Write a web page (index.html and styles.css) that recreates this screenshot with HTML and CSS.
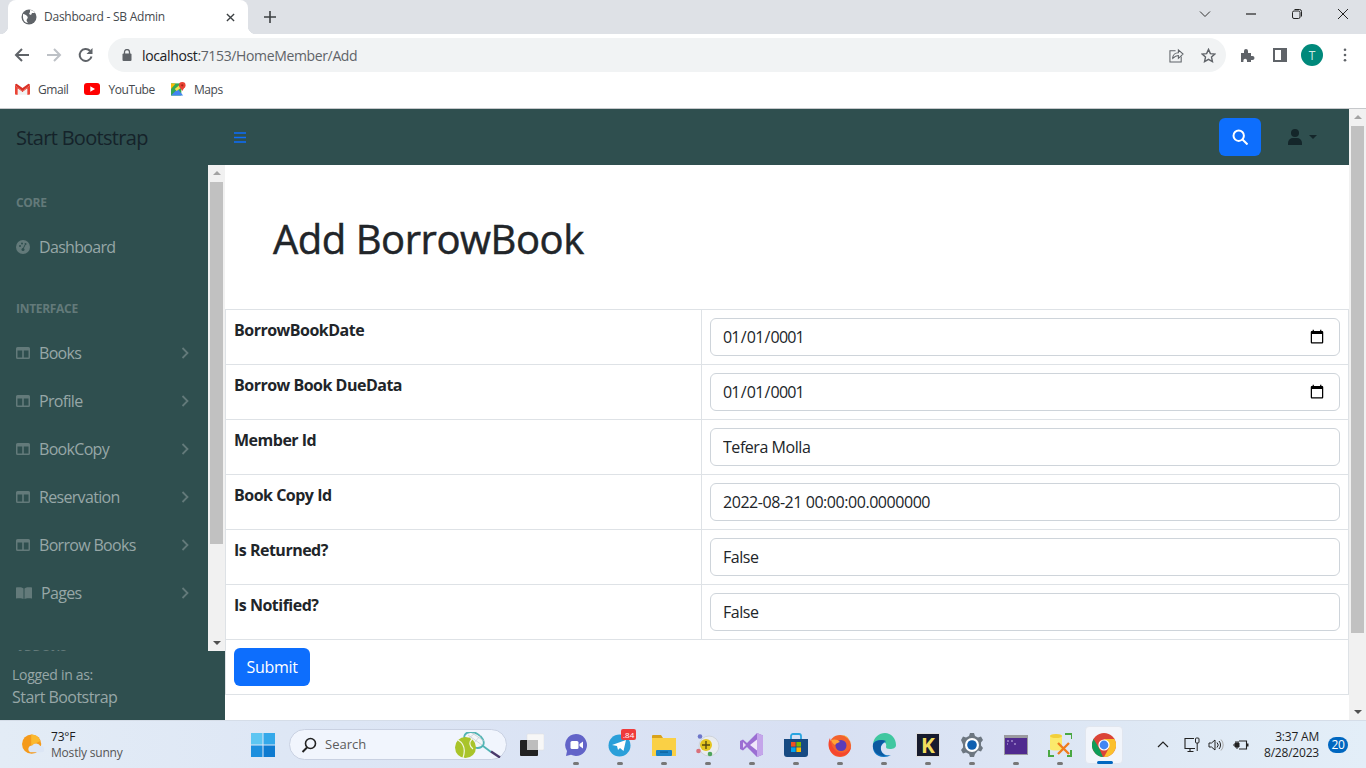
FILE: index.html
```html
<!DOCTYPE html>
<html lang="en">
<head>
<meta charset="utf-8">
<title>Dashboard - SB Admin</title>
<link rel="stylesheet" href="styles.css">
</head>
<body>
<div class="browser">
  <div class="tabstrip">
    <div class="tab">
      <svg class="favicon" viewBox="0 0 16 16"><circle cx="8" cy="8" r="7.5" fill="#5f6368"/><path d="M2 5c2 0 3 1 4 2s1 2 0 3 0 3 1 4c-3 0-5-3-5-6zM9 1c2 0 4 1 5 3h-3l-1 2-2-1 1-2z" fill="#fff"/></svg>
      <span class="tab-title">Dashboard - SB Admin</span>
      <svg class="tab-close" viewBox="0 0 10 10"><path d="M1 1l8 8M9 1l-8 8" stroke="#3c4043" stroke-width="1.5"/></svg>
    </div>
    <svg class="newtab" viewBox="0 0 12 12"><path d="M6 0v12M0 6h12" stroke="#3c4043" stroke-width="1.6"/></svg>
    <div class="spacer"></div>
    <div class="winbtn"><svg viewBox="0 0 12 12"><path d="M1 3.5l5 5 5-5" fill="none" stroke="#333" stroke-width="1"/></svg></div>
    <div class="winbtn"><svg viewBox="0 0 12 12"><path d="M1 6h10" stroke="#222" stroke-width="1.2"/></svg></div>
    <div class="winbtn"><svg viewBox="0 0 12 12"><rect x="1.5" y="3" width="7.5" height="7.5" rx="1.5" fill="none" stroke="#222"/><path d="M3.5 1.5h5a2 2 0 0 1 2 2v5" fill="none" stroke="#222"/></svg></div>
    <div class="winbtn"><svg viewBox="0 0 12 12"><path d="M1 1l10 10M11 1L1 11" stroke="#222" stroke-width="1"/></svg></div>
  </div>
  <div class="toolbar">
    <svg class="navicon" viewBox="0 0 16 16"><path d="M15 8H2M8 2L2 8l6 6" fill="none" stroke="#5f6368" stroke-width="2"/></svg>
    <svg class="navicon" viewBox="0 0 16 16"><path d="M1 8h13M8 2l6 6-6 6" fill="none" stroke="#bdc1c6" stroke-width="2"/></svg>
    <svg class="navicon" viewBox="0 0 16 16"><path d="M13.5 9.5A6 6 0 1 1 12 3.8" fill="none" stroke="#5f6368" stroke-width="2"/><path d="M14.5 1v6h-6z" fill="#5f6368"/></svg>
    <div class="omnibox">
      <svg class="lock" viewBox="0 0 10 12"><rect x="0.5" y="4.5" width="9" height="7.5" rx="1" fill="#5f6368"/><path d="M2.5 5V3a2.5 2.5 0 0 1 5 0v2" fill="none" stroke="#5f6368" stroke-width="1.3"/></svg>
      <span class="url"><span class="url-host">localhost</span>:7153/HomeMember/Add</span>
      <span class="spacer"></span>
      <svg class="omni-icon share" viewBox="0 0 16 16"><path d="M7 3H1v12h12V9" fill="none" stroke="#5f6368" stroke-width="1.1"/><path d="M4 11c0-4 3-6 6-6V2l5 4.500-5 4.500V8C8 8 6 9 4 11z" fill="none" stroke="#5f6368" stroke-width="1.1"/></svg>
      <svg class="omni-icon" viewBox="0 0 16 16"><path d="M8 1.500l2 4.500 4.800.5-3.600 3.200 1 4.800L8 12.100 3.800 14.500l1-4.800L1.200 6.500 6 6z" fill="none" stroke="#5f6368" stroke-width="1.500"/></svg>
    </div>
    <svg class="ext" viewBox="0 0 16 16"><path d="M1 6h3V4a2 2 0 0 1 4 0v2h3v3h1.500a2 2 0 0 1 0 4H11v2H7v-1.500a1.800 1.800 0 0 0-3.600 0V15H1z" fill="#5f6368"/></svg>
    <svg class="panel" viewBox="0 0 14 14"><path d="M0 0h14v14H0zM2 2v10h6V2z" fill="#5f6368" fill-rule="evenodd"/></svg>
    <span class="avatar">T</span>
    <svg class="kebab" viewBox="0 0 4 16"><circle cx="2" cy="2" r="1.500" fill="#5f6368"/><circle cx="2" cy="8" r="1.500" fill="#5f6368"/><circle cx="2" cy="14" r="1.500" fill="#5f6368"/></svg>
  </div>
  <div class="bookmarks">
    <a class="bm">
      <svg class="bm-ico" viewBox="0 0 16 12"><path d="M0 2l8 6 8-6v9a1 1 0 0 1-1 1h-2V5.500L8 9.500 3 5.500V12H1a1 1 0 0 1-1-1z" fill="#ea4335"/><path d="M3 5.500V12h10V5.500L8 9.500z" fill="#f1f1f1"/><path d="M0 2a1.500 1.500 0 0 1 2.400-1.200L8 5 13.600.8A1.500 1.500 0 0 1 16 2L8 8z" fill="#d93025"/></svg>
      <span>Gmail</span>
    </a>
    <a class="bm">
      <svg class="bm-ico yt" viewBox="0 0 16 12"><rect width="16" height="12" rx="3" fill="#f00"/><path d="M6.300 3.300v5.400L11 6z" fill="#fff"/></svg>
      <span>YouTube</span>
    </a>
    <a class="bm">
      <svg class="bm-ico maps" viewBox="0 0 16 16"><path d="M0 2h11v13H0z" fill="#34a853"/><path d="M0 15l7-7 6 7z" fill="#4285f4"/><path d="M0 2h5L0 8z" fill="#fbbc04"/><path d="M4 8l7-6 2 3-7 5z" fill="#f4e04d"/><circle cx="12" cy="4" r="3.500" fill="#ea4335"/><path d="M9.500 6l2.500 4 2.500-4z" fill="#ea4335"/><circle cx="12" cy="4" r="1.200" fill="#a52714"/></svg>
      <span>Maps</span>
    </a>
  </div>
</div>

<div class="viewport">
  <div class="page">
    <nav class="topnav">
      <a class="brand">Start Bootstrap</a>
      <svg class="burger" viewBox="0 0 12 11"><path d="M0 1h12M0 5.500h12M0 10h12" stroke="#0d6efd" stroke-width="1.600"/></svg>
      <span class="spacer"></span>
      <button class="search-btn" type="button"><svg viewBox="0 0 16 16"><circle cx="6.700" cy="6.700" r="5.200" fill="none" stroke="#fff" stroke-width="2"/><path d="M10.500 10.500l5 5" stroke="#fff" stroke-width="2"/></svg></button>
      <div class="user">
        <svg viewBox="0 0 14 16"><circle cx="7" cy="4" r="4" fill="#14262a"/><path d="M0 16v-2a5 5 0 0 1 5-5h4a5 5 0 0 1 5 5v2z" fill="#14262a"/></svg>
        <span class="caret"></span>
      </div>
    </nav>
    <div class="layout">
      <aside class="sidebar">
        <div class="side-scroll">
          <div class="menu">
            <div class="heading">CORE</div>
            <a class="item">
              <svg class="ico" viewBox="0 0 14 14"><circle cx="7" cy="7" r="7" fill="#637a7a"/><circle cx="4" cy="6" r="1" fill="#2f4f4f"/><circle cx="6" cy="3.500" r="1" fill="#2f4f4f"/><circle cx="9.500" cy="4" r="1" fill="#2f4f4f"/><circle cx="7" cy="9.500" r="1.500" fill="#2f4f4f"/><path d="M7 9l2-4" stroke="#2f4f4f" stroke-width="1"/></svg>
              <span>Dashboard</span>
            </a>
            <div class="heading second">INTERFACE</div>
            <a class="item"><svg class="ico" viewBox="0 0 14 12"><path d="M0 1.500A1.500 1.500 0 0 1 1.500 0h11A1.500 1.500 0 0 1 14 1.500v9a1.500 1.500 0 0 1-1.500 1.500h-11A1.500 1.500 0 0 1 0 10.500zM1.500 3.500V10.500h4.700V3.500zM7.800 3.500V10.500h4.700V3.500z" fill="#637a7a" fill-rule="evenodd"/></svg><span>Books</span><svg class="chev" viewBox="0 0 8 12"><path d="M1.500 1l5 5-5 5" fill="none" stroke="#637a7a" stroke-width="1.800"/></svg></a>
            <a class="item"><svg class="ico" viewBox="0 0 14 12"><path d="M0 1.500A1.500 1.500 0 0 1 1.500 0h11A1.500 1.500 0 0 1 14 1.500v9a1.500 1.500 0 0 1-1.500 1.500h-11A1.500 1.500 0 0 1 0 10.500zM1.500 3.500V10.500h4.700V3.500zM7.800 3.500V10.500h4.700V3.500z" fill="#637a7a" fill-rule="evenodd"/></svg><span>Profile</span><svg class="chev" viewBox="0 0 8 12"><path d="M1.500 1l5 5-5 5" fill="none" stroke="#637a7a" stroke-width="1.800"/></svg></a>
            <a class="item"><svg class="ico" viewBox="0 0 14 12"><path d="M0 1.500A1.500 1.500 0 0 1 1.500 0h11A1.500 1.500 0 0 1 14 1.500v9a1.500 1.500 0 0 1-1.500 1.500h-11A1.500 1.500 0 0 1 0 10.500zM1.500 3.500V10.500h4.700V3.500zM7.800 3.500V10.500h4.700V3.500z" fill="#637a7a" fill-rule="evenodd"/></svg><span>BookCopy</span><svg class="chev" viewBox="0 0 8 12"><path d="M1.500 1l5 5-5 5" fill="none" stroke="#637a7a" stroke-width="1.800"/></svg></a>
            <a class="item"><svg class="ico" viewBox="0 0 14 12"><path d="M0 1.500A1.500 1.500 0 0 1 1.500 0h11A1.500 1.500 0 0 1 14 1.500v9a1.500 1.500 0 0 1-1.500 1.500h-11A1.500 1.500 0 0 1 0 10.500zM1.500 3.500V10.500h4.700V3.500zM7.800 3.500V10.500h4.700V3.500z" fill="#637a7a" fill-rule="evenodd"/></svg><span>Reservation</span><svg class="chev" viewBox="0 0 8 12"><path d="M1.500 1l5 5-5 5" fill="none" stroke="#637a7a" stroke-width="1.800"/></svg></a>
            <a class="item"><svg class="ico" viewBox="0 0 14 12"><path d="M0 1.500A1.500 1.500 0 0 1 1.500 0h11A1.500 1.500 0 0 1 14 1.500v9a1.500 1.500 0 0 1-1.500 1.500h-11A1.500 1.500 0 0 1 0 10.500zM1.500 3.500V10.500h4.700V3.500zM7.800 3.500V10.500h4.700V3.500z" fill="#637a7a" fill-rule="evenodd"/></svg><span>Borrow Books</span><svg class="chev" viewBox="0 0 8 12"><path d="M1.500 1l5 5-5 5" fill="none" stroke="#637a7a" stroke-width="1.800"/></svg></a>
            <a class="item"><svg class="ico wide" viewBox="0 0 16 12"><path d="M0 .5c3-.5 6-.5 7.500 1V12C6 11 3 11 0 11.500zM16 .5c-3-.5-6-.5-7.500 1V12c1.500-1 4.500-1 7.500-.5z" fill="#637a7a"/></svg><span>Pages</span><svg class="chev" viewBox="0 0 8 12"><path d="M1.500 1l5 5-5 5" fill="none" stroke="#637a7a" stroke-width="1.800"/></svg></a>
            <div class="heading second">ADDONS</div>
          </div>
          <div class="scrollbar">
            <span class="arrow up"></span>
            <span class="thumb side-thumb"></span>
            <span class="spacer"></span>
            <span class="arrow down"></span>
          </div>
        </div>
        <div class="side-footer">
          <div class="small">Logged in as:</div>
          <div>Start Bootstrap</div>
        </div>
      </aside>
      <main class="content">
        <h1>Add BorrowBook</h1>
        <form>
          <table class="form-table">
            <tr><th>BorrowBookDate</th><td><input class="field date" type="date" value="0001-01-01"></td></tr>
            <tr><th>Borrow Book DueData</th><td><input class="field date" type="date" value="0001-01-01"></td></tr>
            <tr><th>Member Id</th><td><input class="field" type="text" value="Tefera Molla"></td></tr>
            <tr><th>Book Copy Id</th><td><input class="field" type="text" value="2022-08-21 00:00:00.0000000"></td></tr>
            <tr><th>Is Returned?</th><td><input class="field" type="text" value="False"></td></tr>
            <tr><th>Is Notified?</th><td><input class="field" type="text" value="False"></td></tr>
            <tr><td colspan="2" class="submit-cell"><button class="submit" type="button">Submit</button></td></tr>
          </table>
        </form>
      </main>
    </div>
  </div>
  <div class="scrollbar page-bar">
    <span class="arrow up"></span>
    <span class="thumb main-thumb"></span>
    <span class="spacer"></span>
    <span class="arrow down"></span>
  </div>
</div>

<footer class="taskbar">
  <div class="weather">
    <svg class="weather-ico" viewBox="0 0 24 24"><circle cx="10.500" cy="11" r="10.500" fill="#f59a1b"/><path d="M10 .5a10.500 10.500 0 0 1 10 7l-10 5z" fill="#fbb92f"/><path d="M9 20a4 4 0 0 1 2-7.500 5.500 5.500 0 0 1 9 .5 3.500 3.500 0 0 1 1.500 7z" fill="#dce6f5"/></svg>
    <div class="weather-text"><div class="temp">73°F</div><div class="sky">Mostly sunny</div></div>
  </div>
  <div class="slot"><svg class="win" viewBox="0 0 24 24"><path d="M0 0h11.500v11.500H0z" fill="#5ec6f2"/><path d="M12.500 0H24v11.500H12.500z" fill="#35a9ea"/><path d="M0 12.500h11.500V24H0z" fill="#1d8fde"/><path d="M12.500 12.500H24V24H12.500z" fill="#0f7bd0"/></svg></div>
  <div class="searchbox">
    <svg class="search-ico" viewBox="0 0 16 16"><circle cx="9.500" cy="6.500" r="5" fill="none" stroke="#222" stroke-width="1.600"/><path d="M6 10.500L1.500 15" stroke="#222" stroke-width="2"/></svg>
    <span>Search</span>
    <svg class="racket" viewBox="0 0 46 26"><ellipse cx="19" cy="8" rx="10.500" ry="7" transform="rotate(30 19 8)" fill="#f3f6f8" stroke="#52b4b4" stroke-width="1.800"/><path d="M13 3l14 10M17 1l12 8M12 8l8-7M17 13l9-10" stroke="#bfc8ce" stroke-width=".7"/><path d="M28 14l8 6" stroke="#52b4b4" stroke-width="1.800"/><path d="M36 19.500l9 6" stroke="#4a3a6b" stroke-width="2.400"/><circle cx="10.500" cy="15.500" r="10.500" fill="#a9c42a"/><path d="M3 8c5 3 8 9 5 18M17 7c-3 3-3 7 1 10" fill="none" stroke="#f2f6e0" stroke-width="1.200"/></svg>
  </div>
  <div class="apps">
    <div class="slot"><svg viewBox="0 0 24 24"><rect x="7" y="1" width="17" height="16" rx="1" fill="#f7f7f7" stroke="#ddd" stroke-width=".5"/><rect x="0" y="7" width="18" height="16" rx="1" fill="#222"/><rect x="7" y="7" width="11" height="10" fill="#bdbdbd"/></svg></div>
    <div class="slot dot"><svg viewBox="0 0 24 24"><path d="M12 1a11 11 0 1 1-5 20.800L2 23l1-5A11 11 0 0 1 12 1z" fill="#6264c8"/><rect x="6.500" y="8" width="8" height="8" rx="1.500" fill="#fff"/><path d="M15.500 11l3.500-2.500v7L15.500 13z" fill="#fff"/></svg></div>
    <div class="slot dot"><svg viewBox="0 0 24 24"><circle cx="11.500" cy="12.500" r="11" fill="#2a9fd9"/><path d="M4 12l14-5-2.500 11-3.500-3-2 2-1-4z" fill="#fff"/></svg><span class="badge">.84</span></div>
    <div class="slot dot"><svg viewBox="0 0 24 24"><path d="M0 3a1 1 0 0 1 1-1h8l2 3h-11z" fill="#d9a21b"/><path d="M0 5h24v18H0z" fill="#fad045"/><rect x="4" y="17" width="16" height="6" rx="1" fill="#1b82c6"/><rect x="8" y="18.500" width="8" height="1.200" fill="#0b5f99"/></svg></div>
    <div class="slot dot"><svg viewBox="0 0 24 24"><circle cx="13" cy="13" r="10" fill="#e9ecef" stroke="#cfd4da"/><circle cx="10" cy="12" r="6" fill="#e5c51f"/><path d="M10 8v8M6 12h8" stroke="#5a4a10" stroke-width="1.400"/><circle cx="4" cy="3.500" r="2.300" fill="#6d76c9"/><circle cx="2.500" cy="18" r="2.300" fill="#d9707a"/><circle cx="14" cy="21" r="2.300" fill="#4fa35c"/></svg></div>
    <div class="slot dot"><svg viewBox="0 0 24 24"><path d="M17 0l6 2.500v19L17 24 7 14l-4 3.500-3-1.500V8l3-1.500L7 10z" fill="#9b6fd3"/><path d="M17 0l6 2.500v19L17 24z" fill="#c4a5ea"/><path d="M17 6.500L10 12l7 5.500z" fill="#f0e8fa"/><path d="M3 9v6l3-3z" fill="#e5d9f5"/></svg></div>
    <div class="slot dot"><svg viewBox="0 0 24 24"><path d="M7 6V3a2 2 0 0 1 2-2h6a2 2 0 0 1 2 2v3" fill="none" stroke="#2aa5e0" stroke-width="1.800"/><path d="M0 6h24v15a3 3 0 0 1-3 3H3a3 3 0 0 1-3-3z" fill="#174a82"/><rect x="7" y="9" width="4.600" height="4.600" fill="#f25022"/><rect x="12.400" y="9" width="4.600" height="4.600" fill="#7fba00"/><rect x="7" y="14.400" width="4.600" height="4.600" fill="#00a4ef"/><rect x="12.400" y="14.400" width="4.600" height="4.600" fill="#ffb900"/></svg></div>
    <div class="slot dot"><svg viewBox="0 0 24 24"><circle cx="12" cy="13" r="11" fill="#f2622e"/><path d="M13 2c5 1 11 5 11 12 0-3-1-5-3-7 0-2-3-5-8-5z" fill="#fdb32a"/><path d="M2 5c-2 4-2 9 0 12 2 4 7 7 12 6 5-1 8-4 9-9-3 5-8 7-13 5-5-2-7-8-8-14z" fill="#f6462d"/><circle cx="13" cy="12.500" r="5.500" fill="#5b3bb8"/><path d="M3 7c3-1 7-1 9 2-2 1-4 1-5 3-2-1-3-3-4-5z" fill="#ffa436"/></svg></div>
    <div class="slot dot"><svg viewBox="0 0 24 24"><path d="M1 11C2 4 7 0 13 0c6 0 11 5 11 12 0 3-3 4-6 4-3 0-4-1-4-2 1-3-1-6-5-6-4 0-7 2-8 3z" fill="#3fc7a0"/><path d="M1 11c-1 6 2 13 11 13 3 0 5-1 7-2-5 1-9-1-10-5-1-3 1-7 5-8-3-2-11-3-13 2z" fill="#0f76c4"/><path d="M1 11c3-4 9-5 13-3-4 1-6 5-5 9 0 2 2 4 4 6C6 23 0 18 1 11z" fill="#0c5aa0"/></svg></div>
    <div class="slot dot"><span class="k-app">K</span></div>
    <div class="slot dot"><svg viewBox="0 0 24 24"><path d="M10 0h4l1 3 3 1.500 3-1 2 3.500-2 2.500v3l2 2.500-2 3.500-3-1L15 21l-1 3h-4l-1-3-3-1.500-3 1-2-3.500 2-2.500v-3L1 7l2-3.500 3 1L9 3z" fill="#6d7781"/><circle cx="12" cy="12" r="7" fill="#fff"/><circle cx="12" cy="12" r="4.800" fill="#0f5fb0"/></svg></div>
    <div class="slot dot"><svg viewBox="0 0 24 24"><rect y="2" width="24" height="20" fill="#9a9aa0"/><rect x="1" y="5" width="22" height="16" fill="#4f2a8f"/><path d="M3 8h2M3 11h1M7 8h2M10 11h2" stroke="#c9b8e6" stroke-width="1"/></svg></div>
    <div class="slot dot"><svg viewBox="0 0 24 24"><path d="M1 17v6h5M23 17v6h-4M17 1h7v5" fill="none" stroke="#4aa843" stroke-width="2"/><path d="M2 3c0-2 12-2 12 0v13c0 2-12 2-12 0z" fill="#fbe96b"/><ellipse cx="8" cy="3" rx="6" ry="2" fill="#f2cf3a"/><path d="M10 10l11 11M21 10L10 21" stroke="#ef7b1d" stroke-width="2.400"/></svg></div>
    <div class="slot active"><svg viewBox="0 0 24 24"><circle cx="12" cy="12" r="12" fill="#db4437"/><path d="M12 24A12 12 0 0 1 1.600 6L7 15l4 9z" fill="#0f9d58"/><path d="M12 24a12 12 0 0 0 10.400-18H12l5 9z" fill="#fbc02d"/><circle cx="12" cy="12" r="5.600" fill="#fff"/><circle cx="12" cy="12" r="4.400" fill="#4285f4"/></svg><span class="active-bar"></span></div>
  </div>
  <span class="spacer"></span>
  <div class="tray">
    <svg class="t-chev" viewBox="0 0 12 7"><path d="M1 6l5-5 5 5" fill="none" stroke="#222" stroke-width="1.200"/></svg>
    <svg class="t-net" viewBox="0 0 16 16"><path d="M10 1.500H1v10h10M6 11.500V14M3.500 14.500h6" fill="none" stroke="#222" stroke-width="1.100"/><rect x="11.500" y="1" width="3.500" height="5" rx="1" fill="none" stroke="#222"/><path d="M13.200 6v8" stroke="#222"/></svg>
    <svg class="t-vol" viewBox="0 0 16 14"><path d="M1 5h2.500L7 2v10L3.500 9H1z" fill="none" stroke="#222"/><path d="M9 4.500a3.500 3.500 0 0 1 0 5M11 3a6 6 0 0 1 0 8" fill="none" stroke="#222"/><path d="M13 1.500a8 8 0 0 1 0 11" fill="none" stroke="#aaa"/></svg>
    <svg class="t-bat" viewBox="0 0 16 10"><path d="M6 1h7.500v8H6" fill="none" stroke="#222" stroke-width="1.100"/><path d="M14 3.500h1.500v3H14z" fill="#222"/><path d="M0 5h2M2 3h4v4H2zM3 1v2M5 1v2M4 7v2" fill="#222" stroke="#222" stroke-width="1"/></svg>
    <div class="clock"><div>3:37 AM</div><div>8/28/2023</div></div>
    <span class="notif">20</span>
  </div>
</footer>
</body>
</html>
```

FILE: styles.css
```css
* { box-sizing: border-box; }
html, body { margin: 0; height: 768px; overflow: hidden; }
body { display: flex; flex-direction: column; font-family: "Open Sans", "Noto Sans", sans-serif; background: #fff; color: #212529; }
.spacer { flex: 1; }
a { color: inherit; text-decoration: none; }

/* Browser chrome */
.browser { flex: 0 0 109px; display: flex; flex-direction: column; border-bottom: 1px solid #c6c8cb; }
.tabstrip { height: 34px; background: #dee1e6; display: flex; align-items: center; padding-left: 8px; }
.tab { position: relative; width: 240px; height: 34px; background: #fff; border-radius: 8px 8px 0 0; display: flex; align-items: center; padding: 0 13px; }
.tab::before, .tab::after { content: ""; position: absolute; bottom: 0; width: 8px; height: 8px; }
.tab::before { left: -8px; background: radial-gradient(circle at 0 0, #dee1e6 8px, #fff 8.500px); }
.tab::after { right: -8px; background: radial-gradient(circle at 100% 0, #dee1e6 8px, #fff 8.500px); }
.favicon { width: 16px; height: 16px; margin-right: 7px; }
.tab-title { font-size: 12px; letter-spacing: -.25px; color: #45494e; flex: 1; white-space: nowrap; padding-bottom: 2px; }
.tab-close { width: 9px; height: 9px; }
.newtab { width: 12px; height: 12px; margin-left: 16px; }
.winbtn { width: 46px; height: 28px; align-self: flex-start; display: flex; align-items: center; justify-content: center; }
.winbtn svg { width: 12px; height: 12px; }
.toolbar { height: 38px; background: #fff; display: flex; align-items: center; padding-left: 14px; }
.navicon { width: 16px; height: 16px; margin: 4px 16px 0 0; }
.omnibox { width: 1118px; height: 34px; margin: 4px 0 0 -2px; border-radius: 17px; background: #f1f3f4; display: flex; align-items: center; padding: 0 10px 0 14px; }
.lock { width: 10px; height: 12px; margin-right: 10px; }
.url { font-size: 14px; letter-spacing: -.36px; color: #5f6368; }
.url-host { color: #202124; }
.omni-icon { width: 15px; height: 15px; margin-left: 17px; }
.ext { width: 16px; height: 16px; margin: 4px 0 0 14px; }
.panel { width: 14px; height: 14px; margin: 4px 0 0 17px; }
.avatar { width: 22px; height: 22px; border-radius: 50%; background: #00897b; color: #cfeae6; font-size: 12px; display: flex; align-items: center; justify-content: center; margin: 4px 0 0 14px; }
.kebab { width: 4px; height: 14px; margin: 4px 0 0 20px; }
.bookmarks { flex: 1; background: #fff; display: flex; align-items: center; padding: 0 0 2px 15px; }
.bm { display: flex; align-items: center; font-size: 12px; letter-spacing: -.42px; color: #45494e; margin-right: 16px; }
.bm-ico { width: 15px; height: 12px; margin-right: 8px; }
.yt { width: 16px; }
.maps { height: 16px; }

/* Page */
.viewport { flex: 0 0 611px; display: flex; min-height: 0; }
.page { flex: 1; display: flex; flex-direction: column; min-width: 0; }
.topnav { height: 56px; background: #2f4f4f; display: flex; align-items: center; }
.brand { width: 234px; padding-left: 16px; font-size: 20px; letter-spacing: -.68px; color: #15232a; }
.burger { width: 12px; height: 11px; }
.search-btn { width: 42px; height: 38px; border: 0; border-radius: 6px; background: #0d6efd; display: flex; align-items: center; justify-content: center; padding: 0; }
.search-btn svg { width: 16px; height: 16px; }
.user { display: flex; align-items: center; width: 88px; padding: 0 0 0 27px; }
.user svg { width: 14px; height: 16px; }
.caret { width: 0; height: 0; margin-left: 7px; border: 4px solid transparent; border-top-color: #14262a; border-bottom: 0; }
.layout { flex: 1; display: flex; min-height: 0; }
.sidebar { flex: 0 0 225px; background: #2f4f4f; display: flex; flex-direction: column; color: #97a7a7; }
.side-scroll { height: 486px; display: flex; overflow: hidden; }
.menu { flex: 1; padding: 17px 0 0 16px; overflow: hidden; min-width: 0; }
.heading { font-size: 12px; font-weight: 700; letter-spacing: -.3px; height: 41px; line-height: 42px; color: #637a7a; }
.heading.second { margin-top: 17px; }
.item { display: flex; align-items: center; height: 48px; font-size: 16px; letter-spacing: -.68px; padding-right: 19px; }
.ico { width: 14px; height: 14px; margin-right: 9px; flex: none; }
.ico.wide { width: 16px; margin-right: 9px; }
.item span { flex: 1; }
.chev { width: 8px; height: 12px; }
.scrollbar { flex: 0 0 17px; width: 17px; background: #f1f1f1; display: flex; flex-direction: column; align-items: center; }
.arrow { flex: none; width: 0; height: 0; border-left: 4px solid transparent; border-right: 4px solid transparent; }
.arrow.up { border-bottom: 4px solid #a3a3a3; margin: 6px 0 7px; }
.arrow.down { border-top: 4px solid #505050; margin: 7px 0 6px; }
.thumb { width: 13px; background: #c1c1c1; flex: none; }
.side-thumb { height: 362px; }
.main-thumb { height: 507px; }
.side-footer { flex: 1; padding: 13px 12px 0; font-size: 16px; letter-spacing: -.55px; line-height: 24px; }
.small { font-size: 14px; letter-spacing: -.3px; line-height: 21px; }
.content { flex: 1; background: #fff; min-width: 0; }
h1 { margin: 0; height: 144px; padding: 50px 48px 46px; font-size: 40px; line-height: 48px; font-weight: 500; letter-spacing: -.47px; -webkit-text-stroke: .5px #212529; }
.form-table { width: 100%; border-collapse: collapse; table-layout: fixed; font-size: 16px; }
.form-table th, .form-table td { border: 1px solid #dee2e6; padding: 8px; height: 55px; vertical-align: top; }
.form-table th { width: 476px; text-align: left; font-weight: 700; letter-spacing: -.5px; line-height: 24px; }
.field { display: block; width: 100%; height: 38px; padding: 6px 12px; border: 1px solid #ced4da; border-radius: 6px; font: 16px "Open Sans", sans-serif; letter-spacing: -.45px; color: #212529; background: #fff; }
.field.date { letter-spacing: -.8px; }
.field.date::-webkit-datetime-edit { margin-left: -1px; }
.submit { width: 76px; height: 38px; border: 0; border-radius: 6px; background: #0d6efd; color: #fff; font: 16px "Open Sans", sans-serif; letter-spacing: -.3px; display: block; }

/* Taskbar */
.taskbar { flex: 0 0 48px; display: flex; align-items: center; background: linear-gradient(90deg, #e3ecf6 0%, #dde6f5 25%, #d8e0f3 60%, #dfe9f5 85%, #e3eef8 100%); border-top: 1px solid #d5dde8; }
.weather { width: 241px; display: flex; align-items: center; padding-left: 22px; }
.weather-ico { width: 22px; height: 22px; margin-right: 7px; }
.weather-text { font-size: 12px; letter-spacing: -.2px; line-height: 16px; }
.temp { color: #1c1c1c; }
.sky { color: #555; }
.slot { position: relative; flex: none; width: 44px; height: 38px; display: flex; align-items: center; justify-content: center; }
.slot svg { width: 24px; height: 24px; }
.slot.dot::after { content: ""; position: absolute; left: 19px; bottom: -1px; width: 6px; height: 3px; border-radius: 2px; background: #777; }
.win { width: 23px; height: 23px; }
.searchbox { width: 218px; height: 31px; margin-left: 4px; border-radius: 16px; background: #f1f5fd; border: 1px solid #c9d1e2; display: flex; align-items: center; padding: 0 0 2px 11px; font-size: 13px; color: #5c5c5c; position: relative; }
.search-ico { width: 16px; height: 16px; margin: 2px 8px 0 0; }
.racket { position: absolute; right: 5px; top: 2px; width: 46px; height: 26px; }
.apps { display: flex; margin-left: 3px; }
.badge { position: absolute; left: 23px; top: 3px; height: 11px; padding: 0 2px; border-radius: 2px; background: #ef3b3b; color: #fff; font-size: 8px; line-height: 11px; }
.k-app { width: 24px; height: 24px; background: #171b2e; border: 1px solid #ddd; color: #f2dc5d; font: 700 21px/22px "Open Sans", sans-serif; text-align: center; }
.slot.active { background: #f2f5fb; border: 1px solid #e1e6ef; border-radius: 4px; width: 38px; margin-left: 3px; }
.active-bar { position: absolute; left: 11px; bottom: -1px; width: 16px; height: 3px; border-radius: 2px; background: #0067c0; }
.tray { display: flex; align-items: center; }
.t-chev { width: 12px; height: 7px; margin-right: 15px; }
.t-net { width: 16px; height: 16px; margin-right: 8px; }
.t-vol { width: 16px; height: 14px; margin-right: 9px; }
.t-bat { width: 16px; height: 10px; }
.clock { width: 70px; text-align: right; font-size: 12px; letter-spacing: -.2px; line-height: 16px; color: #1f1f1f; }
.notif { width: 20px; height: 16px; margin: 0 18px 0 9px; border-radius: 8px; background: #0067c0; color: #fff; font-size: 12px; line-height: 16px; text-align: center; letter-spacing: -.3px; }
```
